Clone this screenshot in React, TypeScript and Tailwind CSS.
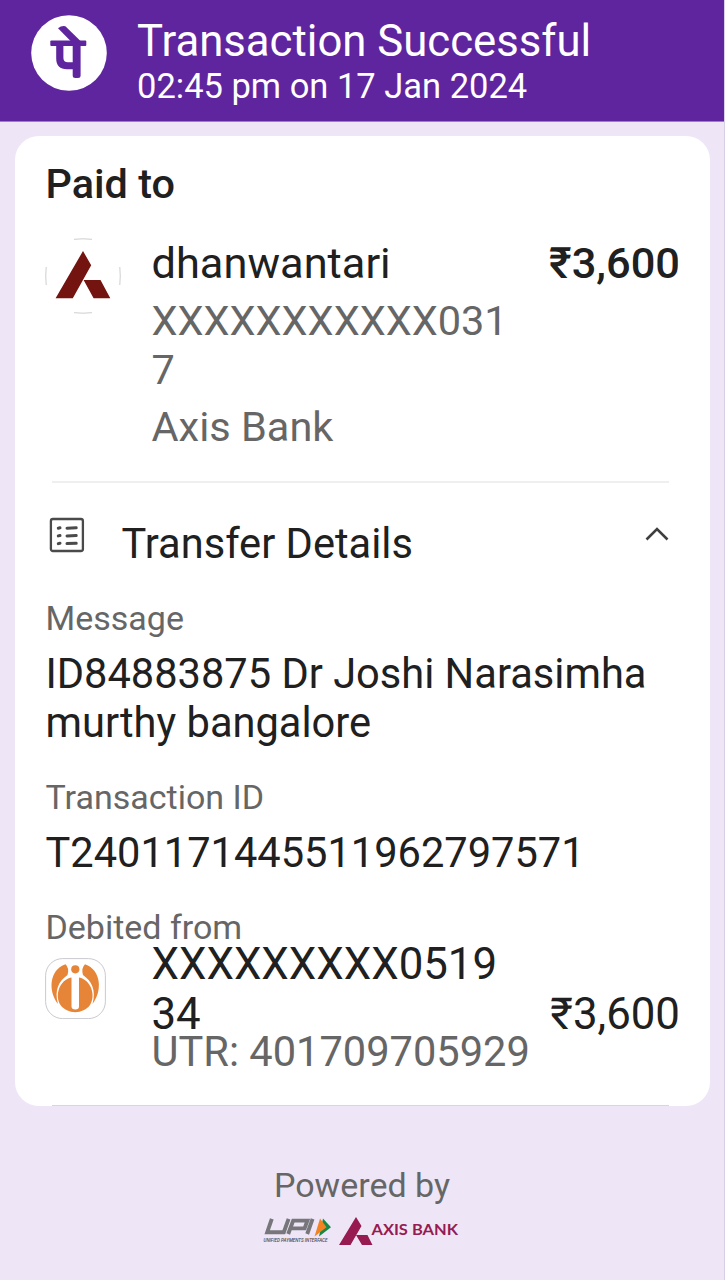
import type { ReactNode } from 'react';

function PhonePeLogo() {
  return (
    <svg className="h-[76px] w-[76px] shrink-0" viewBox="0 0 76 76" fill="none">
      <circle cx="38" cy="38" r="37.8" fill="#fff" />
      <g fill="#5f259f">
        <rect x="19.3" y="25.6" width="36" height="5.5" rx="1" />
        <path d="M27 13.2Q30.5 10.4 34.4 11.2L50 26.5L41.5 28Z" />
        <path d="M25.2 29H32.4V43Q32.4 47.2 37 47.2H41.7V29H49.6V60.5Q49.6 63 46.8 63H44.4Q41.7 63 41.7 60.5V54.2H36Q25.2 54.2 25.2 43.5Z" />
      </g>
    </svg>
  );
}

function AxisAvatar() {
  return (
    <svg className="h-[76px] w-[76px] shrink-0" viewBox="0 0 76 76" fill="none">
      <path d="M29 1.3Q38 .3 47 1.3M29 74.7Q38 75.7 47 74.7M1.2 29Q.3 38 1.2 47M74.8 29Q75.7 38 74.8 47" stroke="#c8c8c8" strokeWidth=".9" />
      <path d="M38 13L46.2 27.3L27.8 60.2H10.6ZM38.6 42H55.5L65.3 60.2H48.6Z" fill="#741410" />
    </svg>
  );
}

function DetailsIcon() {
  return (
    <svg className="h-9 w-9 shrink-0" viewBox="0 0 36 36" fill="none" stroke="#4a4a4a">
      <rect x="1.9" y="2" width="32" height="32" rx="2" strokeWidth="2.3" />
      <path d="M9.3 11.2L11 10.8M9.3 18.9L11 18.5M9.3 26.6L11 26.2M18 11.2L27.2 10.8M18 18.9L27.2 18.5M18 26.6L27.2 26.2" strokeWidth="3" strokeLinecap="round" />
    </svg>
  );
}

function IdbiLogo() {
  return (
    <svg className="h-[61px] w-[61px] shrink-0" viewBox="0 0 61 61" fill="none">
      <rect x=".6" y=".6" width="59.8" height="60" rx="17" fill="#fff" stroke="#c3c3c9" strokeWidth=".9" />
      <g fill="#e68537">
        <circle cx="30.3" cy="11.3" r="4.1" />
        <path d="M20.5 6.2C4 12 3 33 13 46C9 32 14 23 22.5 17Q24.5 10 20.5 6.2Z" />
        <path d="M40 6.2C56.5 12 57.5 33 47.5 46C51.5 32 46.5 23 38 17Q36 10 40 6.2Z" />
        <path d="M26.5 19.5C14 22 9.5 38 15.5 47C22 56.5 38.5 56.5 45 47C51 38 46.5 22 34 19.5V48.5Q34 51.5 30.3 51.5T26.5 48.5Z" />
      </g>
    </svg>
  );
}

function UpiLogo() {
  return (
    <svg className="h-7 w-[70px]" viewBox="0 0 70 28" fill="none">
      <path d="M8.8 1.8L4.2 15.2H20.8L25.6 1.8M25.2 17L30.2 3.6H44.4L41.6 11.4H28.5M49.6 1.8L44.2 17" stroke="#77777b" strokeWidth="3.9" />
      <path d="M60 1.5L68 10.3L56 19.5Z" fill="#16884a" />
      <path d="M57 1.5L63.5 10.3L51.5 19.5Z" fill="#f58220" />
      <text x="0.5" y="25.3" textLength="64" lengthAdjust="spacingAndGlyphs" fill="#4b4b50" fontFamily="Roboto, sans-serif" fontSize="5.2" fontWeight="500" fontStyle="italic">
        UNIFIED PAYMENTS INTERFACE
      </text>
    </svg>
  );
}

function AxisBankLogo() {
  return (
    <svg className="h-7 w-[121px]" viewBox="0 0 121 28" fill="none">
      <path d="M17 0L22.5 9L11.5 28H0ZM17 18H28.5L33.5 28H23Z" fill="#971b50" />
      <text x="32.5" y="18" textLength="86.5" lengthAdjust="spacingAndGlyphs" fill="#971b50" fontFamily="Lato, sans-serif" fontSize="16" fontWeight="700">
        AXIS BANK
      </text>
    </svg>
  );
}

function Label({ children }: { children: ReactNode }) {
  return <div className="text-[34px] leading-10 text-[#666]">{children}</div>;
}

export default function App() {
  return (
    <div className="flex h-[1280px] w-[725px] flex-col overflow-hidden border-r border-[#d9d0e5] bg-[#eee6f7] font-['Roboto',sans-serif] text-[#202020]">
      {/* Header */}
      <header className="-mr-px flex h-[122px] shrink-0 gap-[30px] border-b border-[#a17cc9] bg-[#5f259f] pt-[15px] pl-[31px] text-white">
        <PhonePeLogo />
        <div className="pt-px whitespace-nowrap">
          <h1 className="text-[43.7px] leading-[50px]">Transaction Successful</h1>
          <p className="text-[34.5px] leading-10">02:45 pm on 17 Jan 2024</p>
        </div>
      </header>

      <main className="mx-[15px] -mr-px mt-[14px] flex h-[970px] w-[695px] shrink-0 flex-col rounded-[24px] bg-white pr-[30px] pl-[30.5px]">
        {/* Payee */}
        <h2 className="mt-6 text-[41.4px] leading-[49px] font-medium">Paid to</h2>
        <div className="mt-[29px] -ml-[0.5px] flex">
          <AxisAvatar />
          <div className="ml-[30.5px] mt-px flex-1 text-[41.5px] leading-[49px]">
            <div className="flex justify-between text-[43.4px]">
              <span>dhanwantari</span>
              <span className="font-medium">₹3,600</span>
            </div>
            <div className="mt-[8px] w-[370px] break-all text-[#666]">XXXXXXXXXXX0317</div>
            <div className="mt-[8px] text-[#666]">Axis Bank</div>
          </div>
        </div>

        {/* Transfer details */}
        <div className="mt-[30px] mr-[11px] ml-[6.5px] h-[2px] bg-[#efefef]" />
        <div className="mt-[34px] flex pl-[3.5px]">
          <DetailsIcon />
          <h2 className="mt-[2px] ml-[36.5px] flex-1 text-[41.6px] leading-[49px]">Transfer Details</h2>
          <svg className="mt-[9px] mr-[11px] h-4 w-6" viewBox="0 0 24 16" fill="none" stroke="#3f3f3f" strokeWidth="2.6">
            <path d="M1.5 13.5L12 3L22.5 13.5" />
          </svg>
        </div>

        <div className="mt-[30px]">
          <Label>Message</Label>
          <p className="mt-[11px] text-[41.6px] leading-[49px]">
            ID84883875 Dr Joshi Narasimha
            <br />
            murthy bangalore
          </p>
        </div>
        <div className="mt-[30px]">
          <Label>Transaction ID</Label>
          <p className="mt-[11px] text-[41.6px] leading-[49px]">T2401171445511962797571</p>
        </div>
        <div className="mt-[30px]">
          <Label>Debited from</Label>
          <div className="-mt-[8px] -ml-[0.5px] flex">
            <div className="mt-[19px]">
              <IdbiLogo />
            </div>
            <div className="ml-[45.5px] flex-1">
              <div className="flex items-end justify-between text-[43.8px] leading-[50px]">
                <span className="w-[360px] break-all">XXXXXXXXX051934</span>
                <span>₹3,600</span>
              </div>
              <div className="-mt-[12px] text-[41.6px] leading-[49px] text-[#666]">UTR: 401709705929</div>
            </div>
          </div>
        </div>
        <div className="mt-auto mr-[11px] ml-[6.5px] h-px shrink-0 bg-[#d9d4e1]" />
      </main>

      <footer className="flex flex-col items-center pt-[59px]">
        <Label>Powered by</Label>
        <div className="mt-3 -ml-[2px] flex gap-[6px]">
          <UpiLogo />
          <AxisBankLogo />
        </div>
      </footer>
    </div>
  );
}
